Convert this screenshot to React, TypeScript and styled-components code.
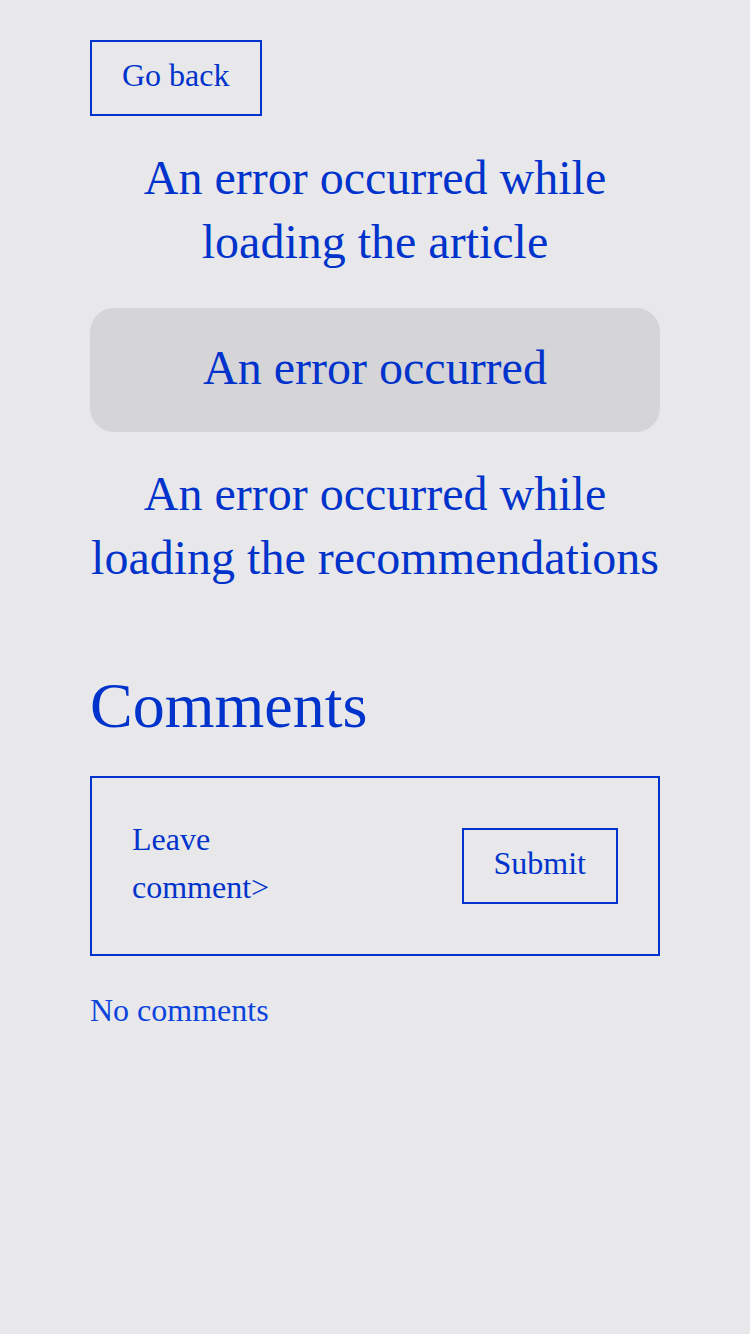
import React from "react";
import styled, { createGlobalStyle } from "styled-components";

const GlobalStyle = createGlobalStyle`
    html, body {
        margin: 0;
        padding: 0;
        background: #e8e8ea;
        font-family: "Liberation Serif", "Times New Roman", serif;
        color: #0033cc;
    }
`;

const Page = styled.div`
    min-height: 1334px;
    padding: 40px 90px;
    box-sizing: border-box;
    display: flex;
    flex-direction: column;
    align-items: stretch;
`;

const OutlineButton = styled.button<{ $align?: string }>`
    align-self: ${(p) => p.$align || "flex-start"};
    font-family: inherit;
    font-size: 32px;
    line-height: 40px;
    color: #0033cc;
    background: transparent;
    border: 2px solid #0033cc;
    padding: 13px 30px 19px;
    cursor: pointer;
    flex-shrink: 0;
`;

const ErrorText = styled.p<{ $top: number }>`
    margin: ${(p) => p.$top}px 0 0;
    font-size: 48px;
    line-height: 64px;
    text-align: center;
`;

const ErrorCard = styled.div`
    margin-top: 34px;
    padding: 28px 20px 32px;
    border-radius: 24px;
    background: #d5d5d7;
    font-size: 48px;
    line-height: 64px;
    text-align: center;
`;

const Title = styled.h2`
    margin: 78px 0 0;
    font-size: 64px;
    line-height: 76px;
    font-weight: normal;
`;

const CommentForm = styled.form`
    margin-top: 32px;
    border: 2px solid #0033cc;
    padding: 40px;
    display: flex;
    align-items: center;
    justify-content: space-between;
`;

const CommentInput = styled.div`
    max-width: 180px;
    margin: -3px 0;
    padding-bottom: 6px;
    font-size: 32px;
    line-height: 48px;
`;

const EmptyNote = styled.p`
    margin: 34px 0 0;
    font-size: 32px;
    line-height: 40px;
    color: #0a44dd;
`;

export default function App() {
    return (
        <>
            <GlobalStyle />
            <Page>
                <OutlineButton type="button">Go back</OutlineButton>
                <ErrorText $top={30}>
                    An error occurred while loading the article
                </ErrorText>
                <ErrorCard>An error occurred</ErrorCard>
                <ErrorText $top={30}>
                    An error occurred while loading the recommendations
                </ErrorText>
                <Title>Comments</Title>
                <CommentForm onSubmit={(e) => e.preventDefault()}>
                    <CommentInput>Leave comment&gt;</CommentInput>
                    <OutlineButton type="submit" $align="center">
                        Submit
                    </OutlineButton>
                </CommentForm>
                <EmptyNote>No comments</EmptyNote>
            </Page>
        </>
    );
}
